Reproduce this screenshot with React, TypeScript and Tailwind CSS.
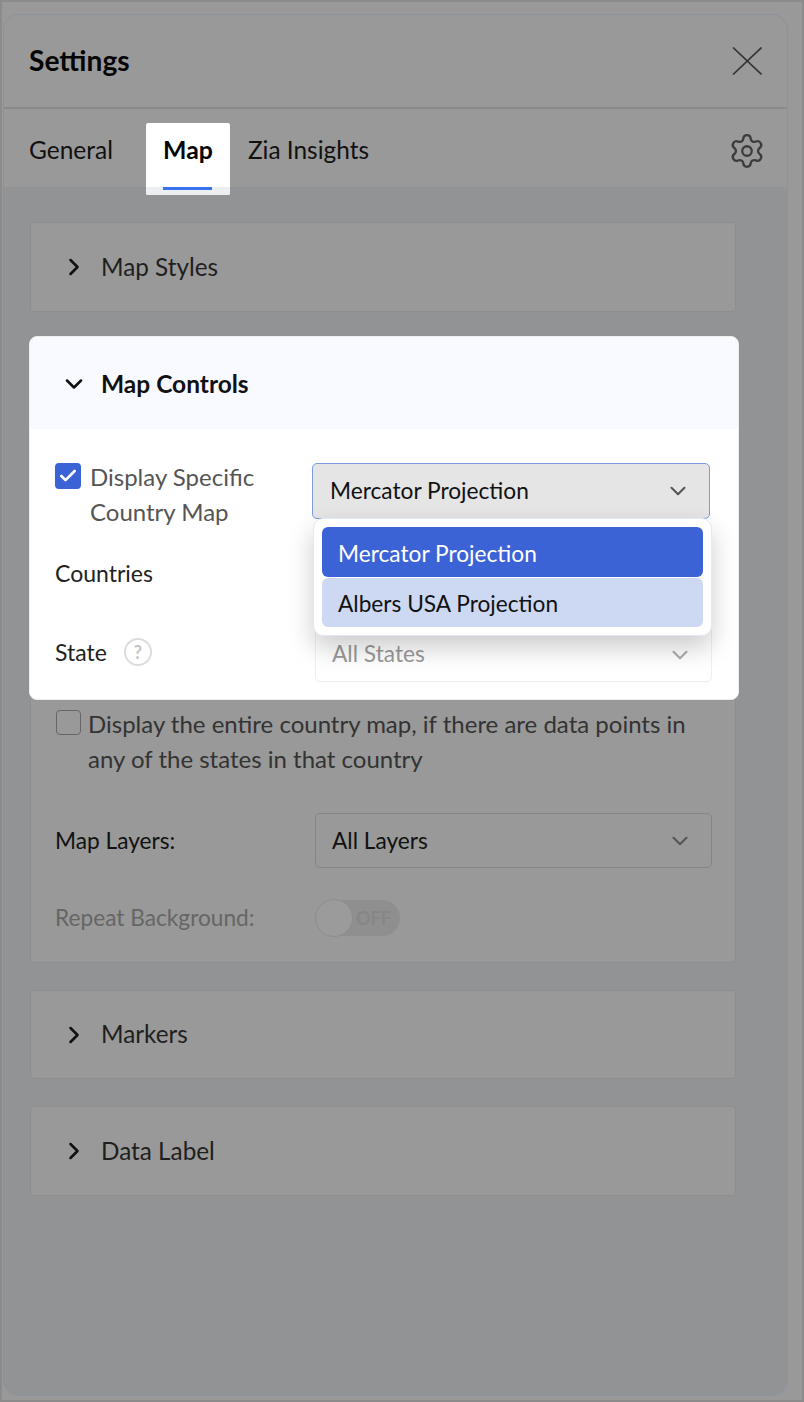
import { ChevronDown, ChevronRight, Check, Settings } from "lucide-react";

function SectionCard({ title, className }: { title: string; className: string }) {
  return (
    <div className={`flex items-center rounded-[4px] border border-[#8e8e8e] bg-[#999999] pl-[29px] ${className}`}>
      <ChevronRight size={28} strokeWidth={2.2} className="text-[#111111]" />
      <span className="ml-[13px] text-[24.3px] text-[#1f1f1f]">{title}</span>
    </div>
  );
}

function SelectBox({ label, className, chevron }: { label?: string; className: string; chevron: string }) {
  return (
    <div className={`flex items-center justify-between rounded-[5px] border pr-[18px] text-[22.7px] ${className}`}>
      <span>{label}</span>
      <ChevronDown size={26} strokeWidth={1.9} className={chevron} />
    </div>
  );
}

export default function App() {
  return (
    <div className="box-border h-[1402px] w-[804px] overflow-hidden border-2 border-[#8b8b8b] bg-[#999999] pl-px pt-[12px] [font-family:Lato,sans-serif]">
      <div className="flex h-[1382px] w-[785px] flex-col overflow-hidden rounded-[16px] border border-[#8c92a2] bg-[#929395]">
        {/* Header */}
        <div className="flex h-[94px] items-center justify-between border-b-2 border-[#8a8a8a] bg-[#999999] pl-[25px] pr-[25px]">
          <h1 className="-mt-[2px] text-[28.2px] font-bold text-[#050505]">Settings</h1>
          <svg width="30" height="28" viewBox="0 0 30 28" fill="none" stroke="#333333" strokeWidth="1.6">
            <path d="M1 0.5 29.5 27.5" />
            <path d="M29.5 0.5 1 27.5" />
          </svg>
        </div>

        {/* Tabs */}
        <div className="relative z-10 flex h-[78px] items-center bg-[#999999] pl-[25px] pr-[21px] pt-[4px]">
          <span className="text-[24.5px] text-[#111111]">General</span>
          <div className="relative ml-[33px] mt-[7px] flex h-[72px] w-[84px] translate-y-[5px] flex-col items-center rounded-[2px] bg-white">
            <span className="mt-[8px] text-[24.8px] font-bold text-[#050505]">Map</span>
            <div className="absolute bottom-0 left-0 flex h-[8px] w-full justify-center rounded-b-[2px] bg-[#eceef2]">
              <div className="h-[3px] w-[49px] bg-[#3b72f0]" />
            </div>
          </div>
          <span className="ml-[18px] text-[24.4px] text-[#111111]">Zia Insights</span>
          <Settings size={38} strokeWidth={1.45} className="ml-auto mt-[2px] text-[#3c3c3c]" />
        </div>

        {/* Accordion list */}
        <div className="flex flex-col pl-[26px] pr-[51px] pt-[35px]">
          <SectionCard title="Map Styles" className="h-[90px]" />

          <div className="mt-[24px] flex h-[627px] flex-col rounded-[4px] border border-[#8e8e8e] bg-[#999999]">
            {/* Map Controls spotlight */}
            <div className="relative z-20 -ml-[2px] -mr-[4px] -mt-px h-[364px] overflow-visible rounded-[8px] border border-[#eeeeee] bg-white">
              <div className="flex h-[92px] items-center rounded-t-[8px] bg-[#f8faff] pl-[30px] pt-[2px]">
                <ChevronDown size={28} strokeWidth={2.2} className="text-[#111111]" />
                <span className="ml-[13px] text-[24.5px] font-bold text-[#111111]">Map Controls</span>
              </div>

              <div className="pl-[25px] pt-[34px]">
                <div className="flex h-[56px]">
                  <div className="flex w-[257px] items-start">
                    <div className="flex h-[26px] w-[26px] items-center justify-center rounded-[4px] bg-[#3b63d6]">
                      <Check size={20} strokeWidth={3.2} className="text-white" />
                    </div>
                    <span className="-mt-[4px] ml-[9px] w-[200px] shrink-0 text-[24px] leading-[35px] text-[#555555]">Display Specific Country Map</span>
                  </div>
                  <div className="relative">
                    <SelectBox label="Mercator Projection" chevron="text-[#555555]" className="h-[56px] w-[398px] border-[#7d9be0] bg-[#e5e5e5] pl-[17px] text-[#111111]" />
                    {/* Open dropdown */}
                    <div className="absolute left-px top-[55px] z-30 flex h-[118px] w-[399px] flex-col gap-px rounded-[10px] border border-[#e3e8f8] bg-white pl-[8px] pr-[8px] pt-[8px] shadow-[0_12px_26px_rgba(0,0,0,0.2)]">
                      <div className="flex h-[50px] items-center rounded-[6px] bg-[#3b63d6] pl-[16px] pt-[4px] text-[22.7px] text-white">Mercator Projection</div>
                      <div className="flex h-[49px] items-center rounded-[6px] bg-[#cdd9f3] pl-[16px] pt-[4px] text-[22.7px] text-[#111111]">Albers USA Projection</div>
                    </div>
                  </div>
                </div>

                <div className="mt-[27px] flex h-[55px] items-center">
                  <span className="-mt-[1px] w-[260px] text-[23px] text-[#222222]">Countries</span>
                  <SelectBox chevron="text-[#aaaaaa]" className="h-[55px] w-[397px] border-[#eeeeee] pl-[16px] text-[#aaaaaa]" />
                </div>

                <div className="mt-[26px] flex h-[55px] items-center">
                  <div className="-mt-[5px] flex w-[260px] items-center">
                    <span className="text-[23px] text-[#222222]">State</span>
                    <span className="ml-[17px] flex h-[28px] w-[28px] items-center justify-center rounded-full border-2 border-[#dddddd] text-[18px] font-bold text-[#c4c4c4]">?</span>
                  </div>
                  <SelectBox label="All States" chevron="text-[#aaaaaa]" className="h-[55px] w-[397px] border-[#eeeeee] pl-[16px] text-[#999999]" />
                </div>
              </div>
            </div>

            {/* Rest of the card, dimmed */}
            <div className="pl-[25px] pt-[10px]">
              <div className="flex items-start">
                <div className="h-[25px] w-[25px] shrink-0 rounded-[4px] border border-[#666666]" />
                <p className="-mt-[4px] ml-[7px] w-[620px] text-[24px] leading-[35px] text-[#333333]">
                  Display the entire country map, if there are data points in any of the states in that country
                </p>
              </div>

              <div className="-ml-px mt-[37px] flex h-[55px] items-center">
                <span className="w-[260px] pt-[1px] text-[22.7px] text-[#111111]">Map Layers:</span>
                <SelectBox label="All Layers" chevron="text-[#555555]" className="h-[55px] w-[397px] border-[#858585] pl-[16px] pt-[1px] text-[#111111]" />
              </div>

              <div className="-ml-px mt-[31px] flex h-[38px] items-center">
                <span className="w-[260px] text-[22.7px] text-[#666666]">Repeat Background:</span>
                <div className="flex h-[36px] w-[85px] items-center rounded-full bg-[#8f8f8f]">
                  <div className="h-[38px] w-[38px] rounded-full border border-[#8e8e8e] bg-[#9b9b9b]" />
                  <span className="ml-[3px] text-[18px] font-bold text-[#868686]">OFF</span>
                </div>
              </div>
            </div>
          </div>

          <SectionCard title="Markers" className="mt-[27px] h-[89px]" />
          <SectionCard title="Data Label" className="mt-[27px] h-[90px]" />
        </div>
      </div>
    </div>
  );
}
